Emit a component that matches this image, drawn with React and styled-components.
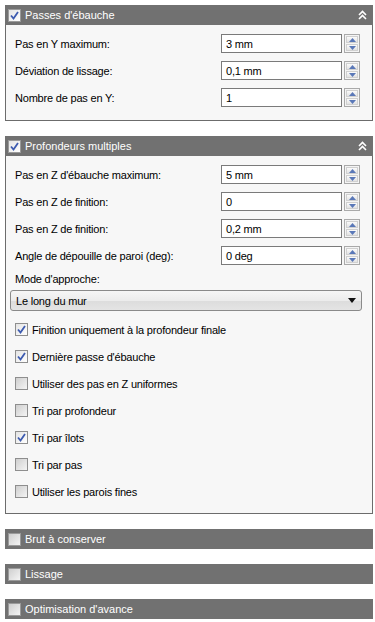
import React from 'react';
import styled, { createGlobalStyle } from 'styled-components';

const GlobalStyle = createGlobalStyle`
  html, body {
    margin: 0;
    padding: 0;
    background: #ffffff;
  }
  body {
    font-family: "Liberation Sans", Arial, sans-serif;
    font-size: 11px;
    color: #000;
  }
`;

const Page = styled.div`
  width: 375px;
  height: 622px;
  padding: 5px 2px 0 5px;
  box-sizing: border-box;
  overflow: hidden;
`;

const Panel = styled.section`
  width: 368px;
  margin-bottom: 15px;
`;

const Header = styled.div`
  height: 20px;
  background: #717171;
  color: #ffffff;
  display: flex;
  align-items: center;
  padding: 0 6px 0 3px;
  box-sizing: border-box;
  font-size: 11px;
`;

const HeaderTitle = styled.span`
  flex: 1;
  margin-left: 4px;
`;

const Body = styled.div`
  background: #f7f7f7;
  border: 1px solid #6c6c6c;
  border-top: none;
  padding: 9px 12px ${p => p.$bottom}px 9px;
  display: flex;
  flex-direction: column;
`;

const FieldRow = styled.div`
  display: flex;
  align-items: center;
  height: 19px;
  margin-bottom: 8px;
`;

const Label = styled.span`
  flex: 1;
  letter-spacing: -0.2px;
`;

const Input = styled.div`
  width: 121px;
  height: 19px;
  box-sizing: border-box;
  border: 1px solid #7a7a7a;
  background: #fff;
  display: flex;
  align-items: center;
  padding-left: 4px;
  letter-spacing: -0.2px;
`;

const Spinner = styled.div`
  width: 16px;
  height: 19px;
  margin-left: 2px;
  display: flex;
  flex-direction: column;
  gap: 1px;
  box-sizing: border-box;
  border: 1px solid #a9a9a9;
  padding: 1px;
  background: #f4f4f4;
`;

const SpinButton = styled.div`
  flex: 1;
  background: linear-gradient(#fbfbfb, #e2e2e2);
  border: 1px solid #d0d0d0;
  display: flex;
  align-items: center;
  justify-content: center;
`;

const ModeLabel = styled.div`
  height: 14px;
  line-height: 14px;
  margin-top: -1px;
  letter-spacing: -0.2px;
`;

const Select = styled.div`
  height: 21px;
  margin: 4px -2px 5px -5px;
  box-sizing: border-box;
  border: 1px solid #8a8a8a;
  border-radius: 3px;
  background: linear-gradient(#f6f6f6 0%, #ececec 50%, #dcdcdc 51%, #e4e4e4 100%);
  display: flex;
  align-items: center;
  padding: 0 5px 0 5px;
  letter-spacing: -0.2px;
`;

const SelectText = styled.span`
  flex: 1;
`;

const CheckRow = styled.label`
  height: 27px;
  display: flex;
  align-items: center;
  gap: 4px;
  letter-spacing: -0.2px;
`;

const Box = styled.span`
  width: 13px;
  height: 13px;
  box-sizing: border-box;
  border: 1px solid ${p => (p.$header ? '#9a9a9a' : '#8e8e8e')};
  background: ${p =>
    p.$checked
      ? 'linear-gradient(135deg, #e4e4e4, #ffffff)'
      : 'linear-gradient(135deg, #cfcfcf, #f4f4f4)'};
  display: inline-flex;
  align-items: center;
  justify-content: center;
  flex-shrink: 0;
`;

const Tick = () => (
  <svg width="9" height="9" viewBox="0 0 9 9">
    <path d="M1 4.5 L3.5 7.5 L8 1" fill="none" stroke="#3d5bb0" strokeWidth="1.8" />
  </svg>
);

const CheckBox = ({ checked, header }) => (
  <Box $checked={checked} $header={header}>
    {checked && <Tick />}
  </Box>
);

const Arrow = ({ up }) => (
  <svg width="7" height="4" viewBox="0 0 7 4">
    <path d={up ? 'M0 4 L3.5 0 L7 4 Z' : 'M0 0 L3.5 4 L7 0 Z'} fill="#5a78b8" />
  </svg>
);

const Collapse = () => (
  <svg width="9" height="10" viewBox="0 0 9 10">
    <path d="M1 5 L4.5 1.5 L8 5 M1 9 L4.5 5.5 L8 9" fill="none" stroke="#fff" strokeWidth="1.6" />
  </svg>
);

const Field = ({ label, value }) => (
  <FieldRow>
    <Label>{label}</Label>
    <Input>{value}</Input>
    <Spinner>
      <SpinButton><Arrow up /></SpinButton>
      <SpinButton><Arrow /></SpinButton>
    </Spinner>
  </FieldRow>
);

const PanelHeader = ({ title, checked, open }) => (
  <Header>
    <CheckBox checked={checked} header />
    <HeaderTitle>{title}</HeaderTitle>
    {open && <Collapse />}
  </Header>
);

const options = [
  { label: 'Finition uniquement à la profondeur finale', checked: true },
  { label: "Dernière passe d'ébauche", checked: true },
  { label: 'Utiliser des pas en Z uniformes', checked: false },
  { label: 'Tri par profondeur', checked: false },
  { label: 'Tri par îlots', checked: true },
  { label: 'Tri par pas', checked: false },
  { label: 'Utiliser les parois fines', checked: false },
];

export default function App() {
  return (
    <>
      <GlobalStyle />
      <Page>
        <Panel>
          <PanelHeader title="Passes d'ébauche" checked open />
          <Body $bottom={5}>
            <Field label="Pas en Y maximum:" value="3 mm" />
            <Field label="Déviation de lissage:" value="0,1 mm" />
            <Field label="Nombre de pas en Y:" value="1" />
          </Body>
        </Panel>
        <Panel>
          <PanelHeader title="Profondeurs multiples" checked open />
          <Body $bottom={8}>
            <Field label="Pas en Z d'ébauche maximum:" value="5 mm" />
            <Field label="Pas en Z de finition:" value="0" />
            <Field label="Pas en Z de finition:" value="0,2 mm" />
            <Field label="Angle de dépouille de paroi (deg):" value="0 deg" />
            <ModeLabel>Mode d'approche:</ModeLabel>
            <Select>
              <SelectText>Le long du mur</SelectText>
              <svg width="8" height="5" viewBox="0 0 8 5">
                <path d="M0 0 L8 0 L4 5 Z" fill="#111" />
              </svg>
            </Select>
            {options.map(o => (
              <CheckRow key={o.label}>
                <CheckBox checked={o.checked} />
                {o.label}
              </CheckRow>
            ))}
          </Body>
        </Panel>
        <Panel>
          <PanelHeader title="Brut à conserver" />
        </Panel>
        <Panel>
          <PanelHeader title="Lissage" />
        </Panel>
        <Panel>
          <PanelHeader title="Optimisation d'avance" />
        </Panel>
      </Page>
    </>
  );
}
